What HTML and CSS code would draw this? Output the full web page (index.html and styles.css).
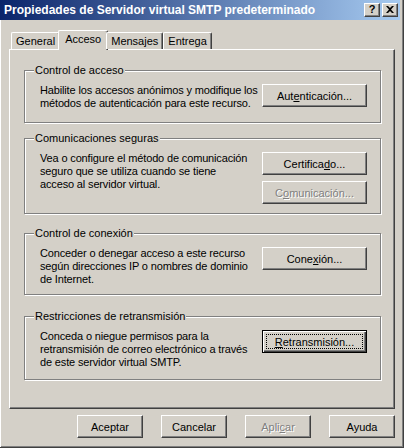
FILE: index.html
```html
<!DOCTYPE html>
<html lang="es">
<head>
  <meta charset="UTF-8">
  <title>Propiedades de Servidor virtual SMTP predeterminado</title>
  <link rel="stylesheet" href="styles.css">
</head>
<body>
  <div class="window">
    <div class="titlebar">
      <span class="title">Propiedades de Servidor virtual SMTP predeterminado</span>
      <div class="caption-btns">
        <button class="cap-btn help">?</button>
        <button class="cap-btn close" title="Cerrar">
          <svg width="8" height="7" viewBox="0 0 8 7"><path d="M0 0h2l2 2 2-2h2L5 3.5 8 7H6L4 5 2 7H0l3-3.5z" fill="#000"/></svg>
        </button>
      </div>
    </div>

    <div class="content">
      <!-- Tabs -->
      <div class="tabs">
        <div class="tab">General</div>
        <div class="tab active">Acceso</div>
        <div class="tab">Mensajes</div>
        <div class="tab">Entrega</div>
      </div>

      <div class="panel">
        <div class="group g1">
          <div class="group-title">Control de acceso</div>
          <div class="group-body">
            <p class="desc">Habilite los accesos anónimos y modifique los<br>métodos de autenticación para este recurso.</p>
            <div class="actions">
              <button class="btn wide">Aut<u>e</u>nticación...</button>
            </div>
          </div>
        </div>

        <div class="group g2">
          <div class="group-title">Comunicaciones seguras</div>
          <div class="group-body">
            <p class="desc">Vea o configure el método de comunicación<br>seguro que se utiliza cuando se tiene<br>acceso al servidor virtual.</p>
            <div class="actions">
              <button class="btn wide">Certifica<u>d</u>o...</button>
              <button class="btn wide" disabled>C<u>o</u>municación...</button>
            </div>
          </div>
        </div>

        <div class="group g3">
          <div class="group-title">Control de conexión</div>
          <div class="group-body">
            <p class="desc">Conceder o denegar acceso a este recurso<br>según direcciones IP o nombres de dominio<br>de Internet.</p>
            <div class="actions">
              <button class="btn wide">Cone<u>x</u>ión...</button>
            </div>
          </div>
        </div>

        <div class="group g4">
          <div class="group-title">Restricciones de retransmisión</div>
          <div class="group-body">
            <p class="desc">Conceda o niegue permisos para la<br>retransmisión de correo electrónico a través<br>de este servidor virtual SMTP.</p>
            <div class="actions">
              <button class="btn wide default"><u>R</u>etransmisión...</button>
            </div>
          </div>
        </div>
      </div>

      <!-- Dialog buttons -->
      <div class="footer">
        <button class="btn">Aceptar</button>
        <button class="btn">Cancelar</button>
        <button class="btn" disabled>Apli<u>c</u>ar</button>
        <button class="btn">Ayuda</button>
      </div>
    </div>
  </div>
</body>
</html>
```

FILE: styles.css
```css
/* --- Base --- */
*{box-sizing:border-box;margin:0;padding:0}
body{background:#d4d0c8;font-family:"Liberation Sans",Arial,sans-serif;font-size:11px;color:#000}

/* --- Window frame --- */
.window{width:404px;height:448px;background:#d4d0c8;border-right:1px solid #404040;border-bottom:1px solid #404040;box-shadow:inset 1px 0 #fff,inset -1px -1px #808080;padding-right:3px}

/* --- Title bar --- */
.titlebar{height:20px;display:flex;align-items:center;justify-content:space-between;padding:0 2px 0 4px;background:linear-gradient(to right,#0a246a,#a6caf0)}
.title{color:#fff;font-weight:700;font-size:12px;white-space:nowrap}
.caption-btns{display:flex;gap:2px}
.cap-btn{width:16px;height:14px;display:flex;align-items:center;justify-content:center;background:#d4d0c8;border:1px solid;border-color:#fff #404040 #404040 #fff;box-shadow:inset -1px -1px #808080;font:700 11px "Liberation Sans",Arial,sans-serif;line-height:1;color:#000;padding:0 0 1px}

/* --- Content --- */
.content{margin-left:9px;width:386px}

/* --- Tabs --- */
.tabs{display:flex;align-items:flex-end;height:19px;margin-top:10px;padding-left:2px;position:relative;z-index:1}
.tab{height:17px;padding:0 4px;line-height:16px;border-top:1px solid #fff;border-left:1px solid #fff;border-right:1px solid #404040;box-shadow:inset -1px 0 #808080;border-radius:2px 2px 0 0;background:#d4d0c8;white-space:nowrap}
.tab.active{height:20px;margin:0 -2px -1px;padding:0 6px;line-height:16px}

/* --- Panel --- */
.panel{height:360px;border:1px solid;border-color:#fff #404040 #404040 #fff;box-shadow:inset -1px -1px #808080;padding:0 13px 0 14px}

/* --- Group boxes --- */
.group{border:1px solid #808080;box-shadow:inset 1px 1px #fff,1px 1px #fff}
.group-title{display:table;margin:-7px 0 0 9px;padding:0 1px;line-height:13px;background:#d4d0c8}
.group-body{display:flex;justify-content:space-between;padding:7px 13px 0 15px}
.desc{line-height:13px;white-space:nowrap;letter-spacing:-.15px;min-width:0}
.actions{display:flex;flex-direction:column;gap:6px;flex-shrink:0}
.g1{margin-top:20px;height:53px}
.g2{margin-top:15px;height:76px}
.g3{margin-top:19px;height:62px}
.g4{margin-top:21px;height:64px}

/* --- Buttons --- */
.btn{width:66px;height:23px;background:#d4d0c8;border:1px solid;border-color:#fff #404040 #404040 #fff;box-shadow:inset -1px -1px #808080;font:11px "Liberation Sans",Arial,sans-serif;color:#000;position:relative}
.btn.wide{width:105px}
.btn:disabled{color:#808080;text-shadow:1px 1px 0 #fff}
.btn.default{border-color:#000;box-shadow:inset 1px 1px #fff,inset -1px -1px #404040,inset -2px -2px #808080}
.btn.default::after{content:"";position:absolute;inset:3px;border:1px dotted #000}

/* --- Footer --- */
.footer{display:flex;justify-content:flex-end;gap:18px;margin-top:6px}
```
